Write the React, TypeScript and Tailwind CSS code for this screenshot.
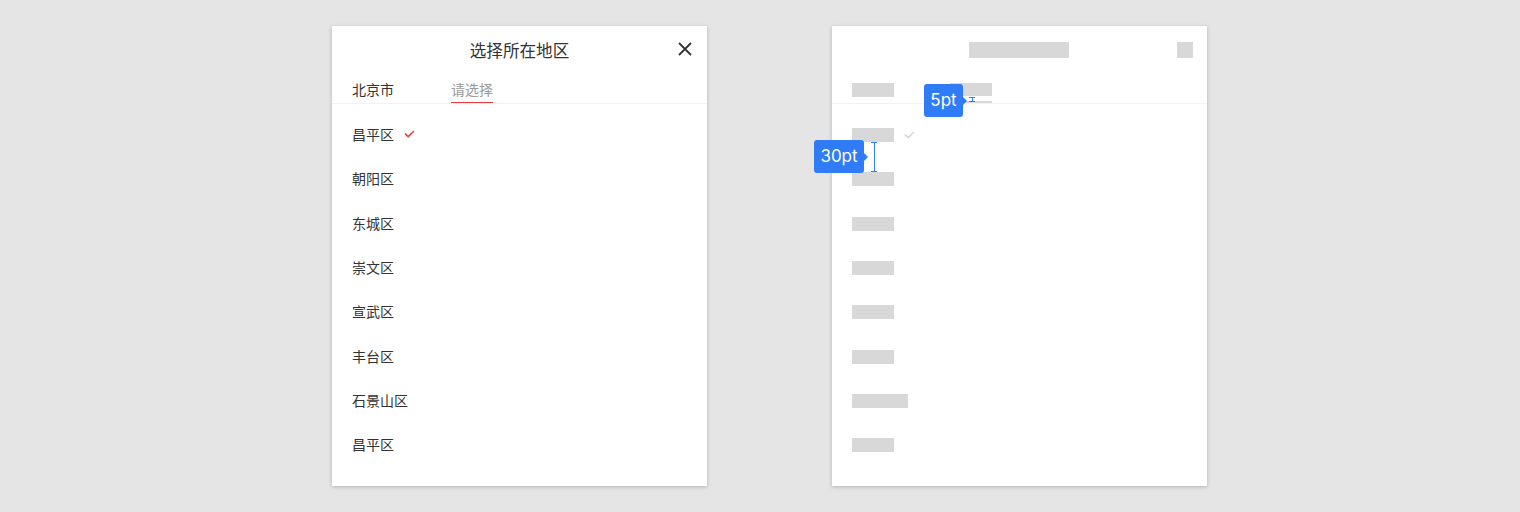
const districts = ["昌平区", "朝阳区", "东城区", "崇文区", "宣武区", "丰台区", "石景山区", "昌平区"];

const cjk = { fontFamily: '"Noto Sans CJK SC", "Noto Sans", sans-serif' };

function Check({ color }: { color: string }) {
  return (
    <svg width="11" height="8" viewBox="0 0 11 8" className="ml-[10px]">
      <polyline points="1,3.6 4.2,6.6 10,1" fill="none" stroke={color} strokeWidth="1.5" />
    </svg>
  );
}

function Badge({ label, className }: { label: string; className: string }) {
  return (
    <div
      className={`absolute flex h-[33px] items-center justify-center rounded-[3px] bg-[#2f7cf6] text-[17px] text-white ${className}`}
      style={{ fontFamily: "Inter, sans-serif" }}
    >
      {label}
      <span className="absolute right-[-4px] top-1/2 h-0 w-0 -translate-y-1/2 border-y-[4px] border-l-[4px] border-y-transparent border-l-[#2f7cf6]" />
    </div>
  );
}

function Measure({ className, height }: { className: string; height: number }) {
  return (
    <div className={`absolute flex w-[6px] flex-col items-center ${className}`} style={{ height }}>
      <div className="h-px w-[6px] bg-[#2f7cf6]" />
      <div className="w-px flex-1 bg-[#2f7cf6]" />
      <div className="h-px w-[6px] bg-[#2f7cf6]" />
    </div>
  );
}

function RealPanel() {
  return (
    <div className="flex h-[460px] w-[375px] flex-col bg-white shadow-[0_1px_4px_rgba(0,0,0,0.22)]" style={cjk}>
      <div className="relative flex h-[48px] items-center justify-center">
        <span className="text-[16.6px] leading-none text-[#333]">选择所在地区</span>
        <svg width="14" height="14" viewBox="0 0 14 14" className="absolute right-[15px] top-[16px]">
          <path d="M1 1 L13 13 M13 1 L1 13" stroke="#333" strokeWidth="1.8" />
        </svg>
      </div>
      <div className="flex h-[30px] gap-[57px] border-b border-[#f3f3f3] px-[20px]">
        <div className="flex flex-col pt-[8px]">
          <span className="text-[14px] leading-[14px] text-[#333]">北京市</span>
        </div>
        <div className="flex flex-col pt-[8px]">
          <span className="text-[14px] leading-[14px] text-[#999]">请选择</span>
          <div className="mt-[6px] h-[2px] bg-[#f23a3a]" />
        </div>
      </div>
      <div className="flex flex-col px-[20px] pt-[8px]">
        {districts.map((d, i) => (
          <div key={i} className="flex h-[44.33px] items-center">
            <span className="text-[14px] leading-[14px] text-[#333]">{d}</span>
            {i === 0 && <Check color="#f23a3a" />}
          </div>
        ))}
      </div>
    </div>
  );
}

function SketchPanel() {
  return (
    <div className="relative flex h-[460px] w-[375px] flex-col bg-white shadow-[0_1px_4px_rgba(0,0,0,0.22)]">
      <div className="relative flex h-[48px] items-center justify-center pr-[1px]">
        <div className="h-[16px] w-[100px] bg-[#d8d8d8]" />
        <div className="absolute right-[14px] top-[16px] h-[16px] w-[16px] bg-[#d8d8d8]" />
      </div>
      <div className="flex h-[30px] gap-[56px] border-b border-[#f3f3f3] px-[20px]">
        <div className="flex flex-col pt-[9px]">
          <div className="h-[14px] w-[42px] bg-[#d8d8d8]" />
        </div>
        <div className="flex flex-col pt-[9px]">
          <div className="h-[14px] w-[42px] bg-[#d8d8d8]" />
          <div className="mt-[5px] h-[2px] bg-[#d8d8d8]" />
        </div>
      </div>
      <div className="flex flex-col px-[20px] pt-[9px]">
        {districts.map((d, i) => (
          <div key={i} className="flex h-[44.33px] items-center">
            <div className="h-[14px] bg-[#d8d8d8]" style={{ width: d.length * 14 }} />
            {i === 0 && <Check color="#d8d8d8" />}
          </div>
        ))}
      </div>
      <Badge label="5pt" className="left-[92px] top-[58px] w-[39px]" />
      <Measure className="left-[137px] top-[71px]" height={5} />
      <Badge label="30pt" className="left-[-18px] top-[114px] w-[50px]" />
      <Measure className="left-[39px] top-[116px]" height={30} />
    </div>
  );
}

export default function App() {
  return (
    <div className="flex h-[512px] w-[1520px] gap-[125px] bg-[#e5e5e5] pl-[332px] pt-[26px]">
      <RealPanel />
      <SketchPanel />
    </div>
  );
}
